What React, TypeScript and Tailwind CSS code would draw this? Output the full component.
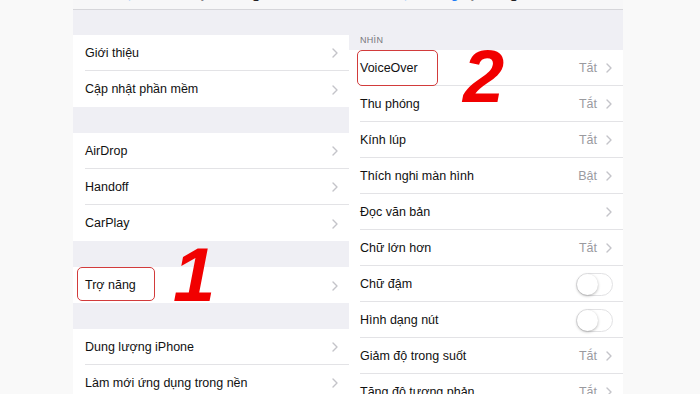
import React from "react";

const Chevron = () => (
  <svg width="6" height="10" viewBox="0 0 6 10" className="shrink-0">
    <polyline points="1,1 5,5 1,9" fill="none" stroke="#c4c4c9" strokeWidth="1.4" strokeLinecap="round" strokeLinejoin="round" />
  </svg>
);

const Toggle = () => (
  <div className="relative w-[37px] h-[23px] rounded-full bg-white border border-[#e2e2e4]">
    <div className="absolute left-0 top-0 w-[21px] h-[21px] rounded-full bg-white shadow-[0_1px_3px_rgba(0,0,0,0.3)]" />
  </div>
);

type RowProps = { label: string; value?: string; toggle?: boolean; sep?: boolean; inset: string };

const Row = ({ label, value, toggle, sep = true, inset }: RowProps) => (
  <div className={`h-[36px] shrink-0 bg-white ${inset}`}>
    <div className={`h-full flex items-center pr-[11px] pt-[1px] ${sep ? "border-b border-[#e3e3e6]" : ""}`}>
      <span className="flex-1 text-[12.5px] text-[#111]">{label}</span>
      {toggle ? (
        <div className="-mr-[1px]"><Toggle /></div>
      ) : (
        <div className="flex items-center gap-[9px]">
          {value && <span className="text-[12.5px] text-[#9a9a9f]">{value}</span>}
          <Chevron />
        </div>
      )}
    </div>
  </div>
);

const NavBar = ({ back, title }: { back: string; title: string }) => (
  <div className="h-[10px] shrink-0 bg-[#f7f7f8] border-b border-[#d6d6da] overflow-hidden relative">
    <div className="absolute left-0 right-0 top-[-15px] leading-[15px] text-[15px]">
      <span className="absolute left-[8px] text-[#1a7cf5]">‹ {back}</span>
      <span className="block text-center text-[#222] font-semibold">{title}</span>
    </div>
  </div>
);

export default function App() {
  const L = "pl-[12px]";
  const R = "pl-[11px]";
  return (
    <div
      className="relative w-[700px] h-[394px] overflow-hidden flex bg-[#f9f9f9]"
      style={{ fontFamily: '"Liberation Sans", Arial, sans-serif' }}
    >
      <div className="w-[73px] shrink-0" />
      {/* Left panel */}
      <div className="w-[276px] shrink-0 flex flex-col bg-[#efeff4]">
        <NavBar back="Cài đặt" title="Cài đặt chung" />
        <div className="h-[25px] shrink-0" />
        <Row inset={L} label="Giới thiệu" />
        <Row inset={L} label="Cập nhật phần mềm" sep={false} />
        <div className="h-[26px] shrink-0" />
        <Row inset={L} label="AirDrop" />
        <Row inset={L} label="Handoff" />
        <Row inset={L} label="CarPlay" sep={false} />
        <div className="h-[26px] shrink-0" />
        <Row inset={L} label="Trợ năng" sep={false} />
        <div className="h-[26px] shrink-0" />
        <Row inset={L} label="Dung lượng iPhone" />
        <Row inset={L} label="Làm mới ứng dụng trong nền" />
      </div>
      {/* Right panel */}
      <div className="w-[274px] shrink-0 flex flex-col bg-[#efeff4]">
        <NavBar back="Cài đặt chung" title="Trợ năng" />
        <div className="h-[40px] shrink-0 flex items-end pl-[11px] pb-[3px]">
          <span className="text-[9px] text-[#77777c] tracking-[0.3px]">NHÌN</span>
        </div>
        <Row inset={R} label="VoiceOver" value="Tắt" />
        <Row inset={R} label="Thu phóng" value="Tắt" />
        <Row inset={R} label="Kính lúp" value="Tắt" />
        <Row inset={R} label="Thích nghi màn hình" value="Bật" />
        <Row inset={R} label="Đọc văn bản" />
        <Row inset={R} label="Chữ lớn hơn" value="Tắt" />
        <Row inset={R} label="Chữ đậm" toggle />
        <Row inset={R} label="Hình dạng nút" toggle />
        <Row inset={R} label="Giảm độ trong suốt" value="Tắt" />
        <Row inset={R} label="Tăng độ tương phản" value="Tắt" />
      </div>
      <div className="flex-1" />

      {/* Annotations */}
      <div className="absolute left-[77px] top-[267px] w-[78px] h-[34px] rounded-[5px] border-[1.5px] border-[#d23b3b]" />
      <div className="absolute left-[357px] top-[50px] w-[81px] h-[36px] rounded-[5px] border-[1.5px] border-[#d23b3b]" />
      <div className="absolute left-[173px] top-[237px] text-[76px] leading-none font-bold italic text-[#f10000]">1</div>
      <div className="absolute left-[463px] top-[40px] text-[74px] leading-none font-bold italic text-[#f10000]">2</div>
    </div>
  );
}
